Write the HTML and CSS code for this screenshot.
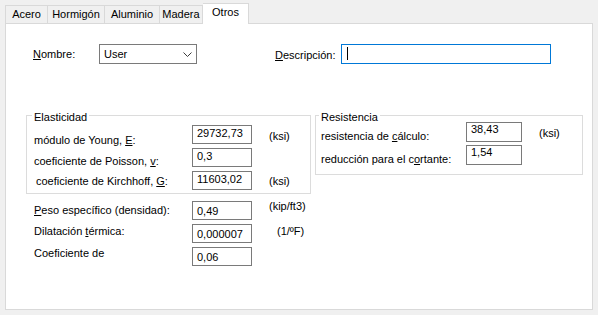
FILE: index.html
```html
<!DOCTYPE html>
<html lang="es">
<head>
    <meta charset="UTF-8">
    <title>Material - Otros</title>
    <link rel="stylesheet" href="styles.css">
</head>
<body>
    <div class="tabs">
        <div class="tab tab-acero">Acero</div>
        <div class="tab tab-hormigon">Hormigón</div>
        <div class="tab tab-aluminio">Aluminio</div>
        <div class="tab tab-madera">Madera</div>
        <div class="tab tab-active">Otros</div>
    </div>

    <div class="panel">
        <div class="top-row">
            <label class="lbl lbl-name"><u>N</u>ombre:</label>
            <div class="combo">
                <span>User</span>
                <svg class="chevron" width="9" height="5" viewBox="0 0 9 5">
                    <polyline points="0.5,0.5 4.5,4.5 8.5,0.5" fill="none" stroke="#3c3c3c" stroke-width="1"/>
                </svg>
            </div>
            <label class="lbl lbl-desc"><u>D</u>escripción:</label>
            <div class="edit edit-focus"><span class="caret"></span></div>
        </div>

        <div class="groups">
            <fieldset class="group group-elast">
                <legend>Elasticidad</legend>
                <div class="grid grid-elast">
                    <span class="lbl pt8">módulo de Young, <u>E</u>:</span>
                    <span class="value">29732,73</span>
                    <span class="unit pt4">(ksi)</span>

                    <span class="lbl pt6">coeficiente de Poisson, <u>v</u>:</span>
                    <span class="value">0,3</span>
                    <span class="unit"></span>

                    <span class="lbl pt3 indent">coeficiente de Kirchhoff, <u>G</u>:</span>
                    <span class="value">11603,02</span>
                    <span class="unit pt3">(ksi)</span>
                </div>
            </fieldset>

            <fieldset class="group group-resist">
                <legend>Resistencia</legend>
                <div class="grid grid-resist">
                    <span class="lbl pt7">resistencia de <u>c</u>álculo:</span>
                    <span class="value value-tight">38,43</span>
                    <span class="unit pt4">(ksi)</span>

                    <span class="lbl pt7">reducción para el c<u>o</u>rtante:</span>
                    <span class="value value-tight">1,54</span>
                    <span class="unit"></span>
                </div>
            </fieldset>
        </div>

        <div class="grid grid-extra">
            <span class="lbl pt2"><u>P</u>eso específico (densidad):</span>
            <span class="value value-low">0,49</span>
            <span class="unit up2">(kip/ft3)</span>

            <span class="lbl">Dilatación <u>t</u>érmica:</span>
            <span class="value value-low">0,000007</span>
            <span class="unit unit-shift">(1/ºF)</span>

            <span class="lbl up1">Coeficiente de</span>
            <span class="value value-low">0,06</span>
            <span class="unit"></span>
        </div>
    </div>
</body>
</html>
```

FILE: styles.css
```css
* {
    box-sizing: border-box;
}

body {
    margin: 0;
    width: 598px;
    height: 315px;
    overflow: hidden;
    background: #f0f0f0;
    color: #000;
    font-family: "Liberation Sans", Arial, sans-serif;
    font-size: 11px;
    line-height: 15px;
}

u {
    text-decoration-thickness: 1px;
    text-underline-offset: 1px;
}

/* tab strip */
.tabs {
    display: flex;
    align-items: flex-end;
    height: 24px;
    margin-bottom: -1px;
    padding-left: 5px;
}

.tab {
    height: 18px;
    margin-bottom: 1px;
    padding-top: 1px;
    border: 1px solid #d9d9d9;
    border-left: none;
    border-bottom: none;
    background: #f0f0f0;
    text-align: center;
    white-space: nowrap;
}

.tab:first-child {
    border-left: 1px solid #d9d9d9;
}

.tab-acero { width: 43px; }
.tab-hormigon { width: 57px; }
.tab-aluminio { width: 55px; }
.tab-madera { width: 43px; }

.tab-active {
    position: relative;
    z-index: 1;
    width: 46px;
    height: 21px;
    margin-bottom: 0;
    background: #fff;
}

.panel {
    height: 287px;
    margin: 0 5px;
    border: 1px solid #d9d9d9;
    background: #fff;
}

/* name / description row */
.top-row {
    display: flex;
    align-items: flex-start;
    height: 20px;
    margin-top: 20px;
    padding-left: 27px;
}

.lbl-name {
    width: 66px;
    padding-top: 3px;
}

.combo {
    display: flex;
    align-items: center;
    justify-content: space-between;
    width: 98px;
    height: 20px;
    margin-right: 78px;
    padding: 0 4px 0 4px;
    border: 1px solid #7a7a7a;
}

.chevron {
    display: block;
}

.lbl-desc {
    width: 66px;
    padding-top: 4px;
}

.edit {
    width: 210px;
    height: 20px;
    border: 1px solid #7a7a7a;
    padding: 2px 5px;
}

.edit-focus {
    border-color: #0078d7;
}

.caret {
    display: block;
    width: 1px;
    height: 13px;
    background: #000;
}

/* group boxes */
.groups {
    display: flex;
    align-items: flex-start;
    margin-top: 41px;
    padding-left: 20px;
}

.group {
    margin: 0;
    min-width: 0;
    border: 1px solid #dcdcdc;
}

.group legend {
    margin-left: -2px;
    padding: 5px 2px 0;
    line-height: 15px;
}

.group-elast {
    width: 285px;
    padding: 0 0 3px 7px;
}

.group-resist {
    width: 268px;
    margin-left: 4px;
    padding: 0 0 9px 5px;
}

.grid {
    display: grid;
    align-items: start;
    column-gap: 17px;
}

.grid-elast {
    grid-template-columns: 141px 60px auto;
    grid-auto-rows: 19px;
    row-gap: 4px;
}

.grid-resist {
    grid-template-columns: 128px 56px auto;
    grid-auto-rows: 20px;
    row-gap: 3px;
    margin-top: -3px;
}

.grid-extra {
    grid-template-columns: 141px 60px auto;
    grid-auto-rows: 19px;
    row-gap: 4px;
    margin-top: 7px;
    padding-left: 28px;
}

.lbl, .unit {
    white-space: nowrap;
}

.value {
    height: 100%;
    padding: 0 4px;
    border: 1px solid #7a7a7a;
    white-space: nowrap;
}

.value-tight {
    line-height: 13px;
}

.value-low {
    padding-top: 2px;
}

.indent {
    padding-left: 2px;
}

.unit-shift {
    padding-left: 8px;
}

.pt2 { padding-top: 2px; }
.pt3 { padding-top: 3px; }
.pt4 { padding-top: 4px; }
.pt6 { padding-top: 6px; }
.pt7 { padding-top: 7px; }
.pt8 { padding-top: 8px; }
.up1 { margin-top: -1px; }
.up2 { margin-top: -2px; }
```
